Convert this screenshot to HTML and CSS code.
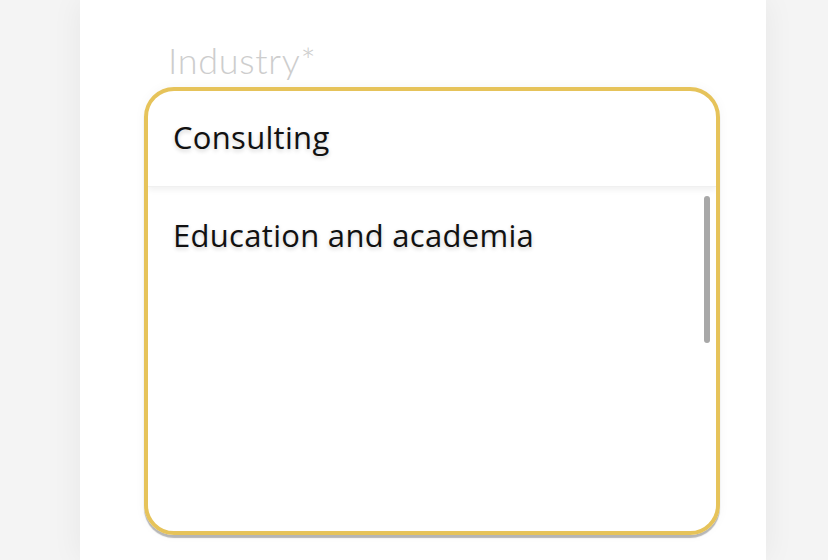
FILE: index.html
```html
<!DOCTYPE html>
<html lang="en">
<head>
    <meta charset="UTF-8">
    <meta name="viewport" content="width=device-width, initial-scale=1.0">
    <title>Industry</title>
    <link rel="stylesheet" href="styles.css">
</head>
<body>

    <div class="card">
        <div class="field">
            <div class="field-label">Industry*</div>
            <div class="select-list">
                <div class="option option-selected">Consulting</div>
                <div class="options-scroll">
                    <div class="option">Education and academia</div>
                    <div class="scrollbar"></div>
                </div>
            </div>
        </div>
    </div>

</body>
</html>
```

FILE: styles.css
```css
html, body {
    height: 100%;
}

body {
    margin: 0;
    box-sizing: border-box;
    background-color: #f4f4f4;
    font-family: 'Open Sans', 'Noto Sans', sans-serif;
    overflow: hidden;
}

.card {
    margin-left: 80px;
    width: 686px;
    height: 100%;
    background-color: #ffffff;
    box-shadow: 0 0 30px rgba(0,0,0,0.06);
    padding: 38px 46px 0 64px;
    box-sizing: border-box;
}

.field-label {
    font-family: 'Lato', sans-serif;
    font-weight: 300;
    font-size: 36px;
    letter-spacing: 0.7px;
    color: #cdcdcd;
    line-height: 44px;
    padding-left: 24px;
}

.select-list {
    margin-top: 5px;
    height: 448px;
    border: 4px solid #e6c35a;
    border-radius: 30px;
    box-sizing: border-box;
    overflow: hidden;
    box-shadow: 0 3px 1px rgba(0,0,0,0.28), 0 0 12px rgba(0,0,0,0.04);
    display: flex;
    flex-direction: column;
}

.option {
    font-size: 31px;
    letter-spacing: 0.3px;
    color: #111111;
    text-shadow: 0 2px 4px rgba(0,0,0,0.18);
    padding: 0 25px;
}

.option-selected {
    height: 95px;
    line-height: 93px;
    flex-shrink: 0;
    box-shadow: 0 3px 6px rgba(0,0,0,0.06);
    border-bottom: 1px solid #f0f0f0;
}

.options-scroll {
    flex: 1;
    position: relative;
    padding-top: 15px;
}

.options-scroll .option {
    line-height: 66px;
}

.scrollbar {
    position: absolute;
    top: 9px;
    right: 6px;
    width: 6px;
    height: 147px;
    border-radius: 3px;
    background-color: #a8a8a8;
}
```
